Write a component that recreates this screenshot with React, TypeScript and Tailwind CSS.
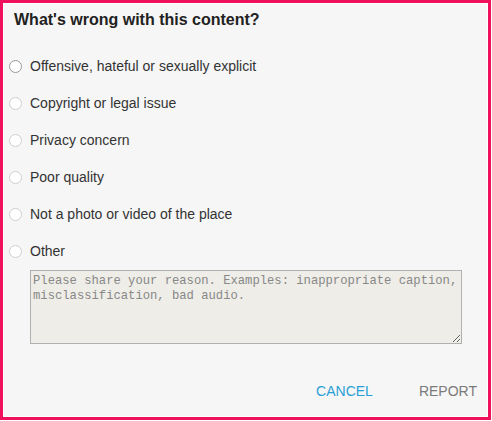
import * as React from 'react';

const reasons = [
  'Offensive, hateful or sexually explicit',
  'Copyright or legal issue',
  'Privacy concern',
  'Poor quality',
  'Not a photo or video of the place',
  'Other',
];

const App: React.FC = () => {
  const [selected, setSelected] = React.useState<number | null>(null);

  return (
    <div className="w-[492px] h-[421px] bg-white" style={{ fontFamily: '"Liberation Sans", Arial, sans-serif' }}>
      <div className="w-[491px] h-[420px] border-[3px] border-[#f0115d]">
        <div className="h-full border border-white bg-[#f6f6f6] flex flex-col">
          <h1 className="pl-[10px] pt-[7px] text-[16px] leading-[18px] font-bold text-[#222]">
            What's wrong with this content?
          </h1>
          <div className="mt-[19px] flex flex-col">
            {reasons.map((r, i) => (
              <label key={i} className="h-[37px] flex items-center cursor-pointer" onClick={() => setSelected(i)}>
                <span
                  className={`ml-[5px] w-[13px] h-[13px] rounded-full bg-white border ${
                    i === 0 ? 'border-[#9a9a9a]' : 'border-[#cfcfcf]'
                  } flex items-center justify-center`}
                >
                  {selected === i && <span className="w-[7px] h-[7px] rounded-full bg-[#2a9fd6]" />}
                </span>
                <span className="ml-[8px] text-[14px] text-[#333]">{r}</span>
              </label>
            ))}
          </div>
          <textarea
            className="ml-[26px] w-[432px] h-[74px] bg-[#eeede7] border border-[#b0b0b0] px-[2px] pt-[3px] text-[12.2px] leading-[15px] text-[#555] placeholder:text-[#888] outline-none"
            style={{ fontFamily: '"Liberation Mono", "DejaVu Sans Mono", monospace' }}
            placeholder="Please share your reason. Examples: inappropriate caption, misclassification, bad audio."
          />
          <div className="mt-auto mb-[14px] flex justify-end items-center gap-[46px] pr-[10px] text-[14px]">
            <button className="text-[#2a9fd6]">CANCEL</button>
            <button className="text-[#7a7a7a]">REPORT</button>
          </div>
        </div>
      </div>
    </div>
  );
};

export default App;
